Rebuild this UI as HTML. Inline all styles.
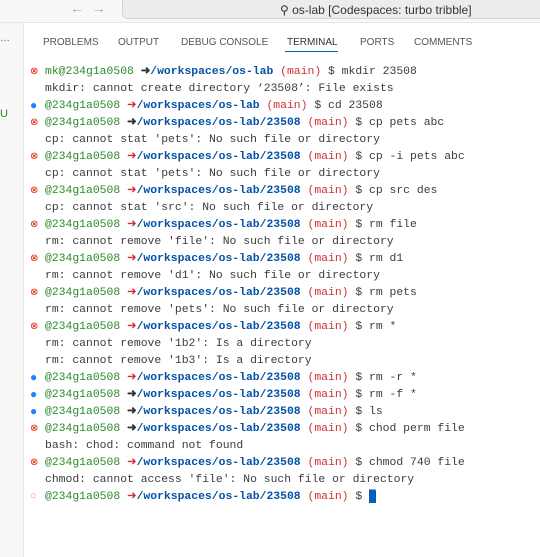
<html><head><style>
body{margin:0;width:540px;height:557px;background:#fff;position:relative;overflow:hidden;font-family:"Liberation Sans",sans-serif}
.title{position:absolute;left:0;top:0;width:540px;height:22px;background:#f8f8f8;border-bottom:1px solid #e5e5e5}
.search{position:absolute;left:122px;top:-4px;width:430px;height:21px;background:#ececec;border:1px solid #d4d4d4;border-radius:6px}
.side{position:absolute;left:0;top:23px;width:23px;height:534px;background:#f8f8f8;border-right:1px solid #e5e5e5}
.tabs{position:absolute;top:37px;left:43px;font-size:10px;color:#555;white-space:nowrap}
.tabs span{position:absolute;top:0}
.term{position:absolute;left:30px;top:64px;font-family:"Liberation Mono",monospace;font-size:11.4px;line-height:17px;color:#3b3b3b;white-space:pre}
.g{color:#2a8a2a}.b{color:#0451a5;font-weight:bold}.r{color:#cd3131}.k{color:#333;font-weight:bold}
.ic{display:inline-block;width:15px;font-size:10px;vertical-align:top;line-height:17px;height:17px}
.e{color:#e51400}.o{color:#1a85ff;font-size:12px}.c{color:#aaa;font-size:11px}
</style></head><body>
<div class="title"><div class="search"></div>
<span style="position:absolute;left:70px;top:0;color:#aaa;font-size:14px">←&nbsp;&nbsp;→</span>
<span style="position:absolute;left:280px;top:3px;font-size:12px;color:#333">⚲ os-lab [Codespaces: turbo tribble]</span></div>
<div class="side"><span style="position:absolute;left:0;top:10px;font-size:10px;color:#555">…</span><span style="position:absolute;left:0;top:85px;font-size:11px;color:#2a8a2a">U</span></div>
<div class="tabs"><span style="left:0">PROBLEMS</span><span style="left:75px">OUTPUT</span><span style="left:138px">DEBUG CONSOLE</span><span style="left:244px;color:#333">TERMINAL</span><span style="left:317px">PORTS</span><span style="left:371px">COMMENTS</span></div>
<div style="position:absolute;left:285px;top:51px;width:53px;height:1px;background:#005fb8"></div>
<div class="term"><span class="ic e">⊗</span><span class="g">mk@234g1a0508 </span><span class="k">➜</span><span class="b">/workspaces/os-lab</span> <span class="r">(main)</span> $ mkdir 23508
<span class="ic"></span>mkdir: cannot create directory ‘23508’: File exists
<span class="ic o">●</span><span class="g">@234g1a0508 </span><span class="r">➜</span><span class="b">/workspaces/os-lab</span> <span class="r">(main)</span> $ cd 23508
<span class="ic e">⊗</span><span class="g">@234g1a0508 </span><span class="k">➜</span><span class="b">/workspaces/os-lab/23508</span> <span class="r">(main)</span> $ cp pets abc
<span class="ic"></span>cp: cannot stat 'pets': No such file or directory
<span class="ic e">⊗</span><span class="g">@234g1a0508 </span><span class="r">➜</span><span class="b">/workspaces/os-lab/23508</span> <span class="r">(main)</span> $ cp -i pets abc
<span class="ic"></span>cp: cannot stat 'pets': No such file or directory
<span class="ic e">⊗</span><span class="g">@234g1a0508 </span><span class="r">➜</span><span class="b">/workspaces/os-lab/23508</span> <span class="r">(main)</span> $ cp src des
<span class="ic"></span>cp: cannot stat 'src': No such file or directory
<span class="ic e">⊗</span><span class="g">@234g1a0508 </span><span class="r">➜</span><span class="b">/workspaces/os-lab/23508</span> <span class="r">(main)</span> $ rm file
<span class="ic"></span>rm: cannot remove 'file': No such file or directory
<span class="ic e">⊗</span><span class="g">@234g1a0508 </span><span class="r">➜</span><span class="b">/workspaces/os-lab/23508</span> <span class="r">(main)</span> $ rm d1
<span class="ic"></span>rm: cannot remove 'd1': No such file or directory
<span class="ic e">⊗</span><span class="g">@234g1a0508 </span><span class="r">➜</span><span class="b">/workspaces/os-lab/23508</span> <span class="r">(main)</span> $ rm pets
<span class="ic"></span>rm: cannot remove 'pets': No such file or directory
<span class="ic e">⊗</span><span class="g">@234g1a0508 </span><span class="r">➜</span><span class="b">/workspaces/os-lab/23508</span> <span class="r">(main)</span> $ rm *
<span class="ic"></span>rm: cannot remove '1b2': Is a directory
<span class="ic"></span>rm: cannot remove '1b3': Is a directory
<span class="ic o">●</span><span class="g">@234g1a0508 </span><span class="r">➜</span><span class="b">/workspaces/os-lab/23508</span> <span class="r">(main)</span> $ rm -r *
<span class="ic o">●</span><span class="g">@234g1a0508 </span><span class="k">➜</span><span class="b">/workspaces/os-lab/23508</span> <span class="r">(main)</span> $ rm -f *
<span class="ic o">●</span><span class="g">@234g1a0508 </span><span class="k">➜</span><span class="b">/workspaces/os-lab/23508</span> <span class="r">(main)</span> $ ls
<span class="ic e">⊗</span><span class="g">@234g1a0508 </span><span class="k">➜</span><span class="b">/workspaces/os-lab/23508</span> <span class="r">(main)</span> $ chod perm file
<span class="ic"></span>bash: chod: command not found
<span class="ic e">⊗</span><span class="g">@234g1a0508 </span><span class="r">➜</span><span class="b">/workspaces/os-lab/23508</span> <span class="r">(main)</span> $ chmod 740 file
<span class="ic"></span>chmod: cannot access 'file': No such file or directory
<span class="ic c">○</span><span class="g">@234g1a0508 </span><span class="r">➜</span><span class="b">/workspaces/os-lab/23508</span> <span class="r">(main)</span> $ <span style="background:#005fb8;color:#005fb8">█</span></div>
</body></html>
